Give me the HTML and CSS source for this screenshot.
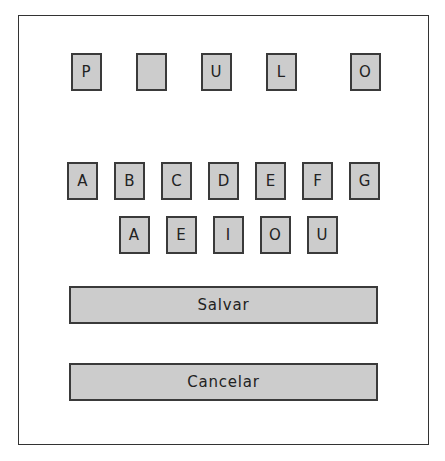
FILE: index.html
```html
<!DOCTYPE html>
<html lang="pt">
<head>
    <meta charset="UTF-8">
    <meta name="viewport" content="width=device-width, initial-scale=1.0">
    <title>Jogo da Forca</title>
    <link rel="stylesheet" href="styles.css">
</head>
<body>
    <div class="frame">
        <div class="word">
            <div class="tile">P</div>
            <div class="tile"></div>
            <div class="tile">U</div>
            <div class="tile">L</div>
            <div class="tile far">O</div>
        </div>

        <div class="letters">
            <div class="tile">A</div>
            <div class="tile">B</div>
            <div class="tile">C</div>
            <div class="tile">D</div>
            <div class="tile">E</div>
            <div class="tile">F</div>
            <div class="tile">G</div>
        </div>
        <div class="letters vowels">
            <div class="tile">A</div>
            <div class="tile">E</div>
            <div class="tile">I</div>
            <div class="tile">O</div>
            <div class="tile">U</div>
        </div>

        <div class="actions">
            <button class="btn">Salvar</button>
            <button class="btn">Cancelar</button>
        </div>
    </div>
</body>
</html>
```

FILE: styles.css
```css
* {
    box-sizing: border-box;
}

body {
    margin: 0;
    background-color: #fff;
    font-family: "DejaVu Sans", sans-serif;
    color: #222;
}

.frame {
    width: 411px;
    height: 430px;
    margin: 15px 0 0 18px;
    border: 1.5px solid #333;
    padding-top: 36.5px;
}

.tile {
    width: 31px;
    height: 38px;
    background-color: #ccc;
    border: 2px solid #3a3a3a;
    display: flex;
    justify-content: center;
    align-items: center;
    font-size: 15px;
}

.word {
    display: flex;
    padding-left: 51.5px;
}

.word .tile + .tile {
    margin-left: 34px;
}

.word .tile.far {
    margin-left: 53px;
}

.letters {
    display: flex;
    justify-content: center;
    gap: 16px;
    margin-top: 71px;
}

.letters.vowels {
    margin-top: 16px;
    padding-left: 9px;
}

.actions {
    display: flex;
    flex-direction: column;
    gap: 39px;
    padding: 0 50px;
    margin-top: 32px;
}

.btn {
    height: 38px;
    width: 100%;
    background-color: #ccc;
    border: 2px solid #3a3a3a;
    border-radius: 0;
    font-family: "DejaVu Sans", sans-serif;
    font-size: 15px;
    letter-spacing: 0.8px;
    color: #222;
    padding: 0;
}
```
